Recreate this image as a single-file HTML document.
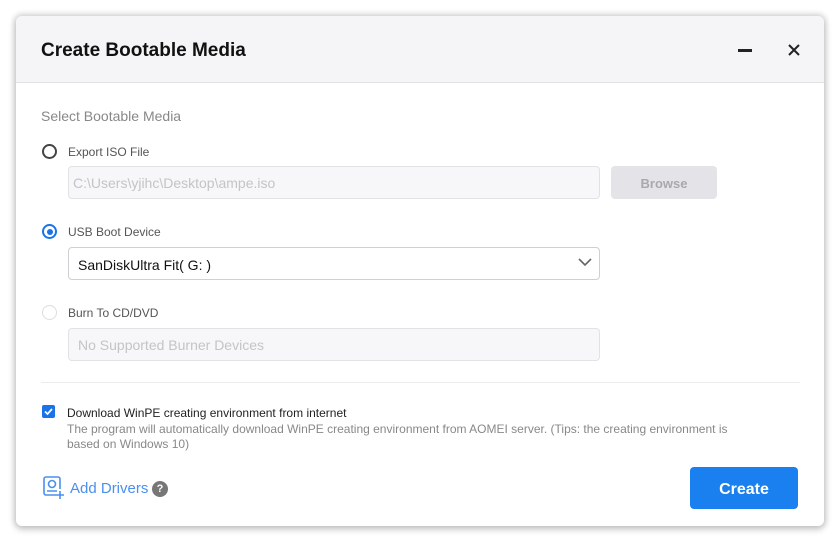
<!DOCTYPE html>
<html><head><meta charset="utf-8"><style>
*{box-sizing:border-box;margin:0;padding:0}
body{width:840px;height:542px;background:#fff;font-family:"Liberation Sans",sans-serif;position:relative;overflow:hidden}
.dlg{position:absolute;left:16px;top:16px;width:808px;height:510px;background:#fff;border-radius:6px;box-shadow:0 0 6px 2px rgba(0,0,0,.18),0 4px 8px rgba(0,0,0,.12);overflow:hidden}
.hdr{position:absolute;left:0;top:0;width:100%;height:67px;background:#f5f5f7;border-bottom:1px solid #e2e2e6}
.title{position:absolute;left:25px;top:24px;font-size:19px;font-weight:bold;color:#111}
.abs{position:absolute}
.t{font-size:12px;color:#555}
.radio{position:absolute;width:15px;height:15px;border-radius:50%;border:2px solid #444}
.inp{position:absolute;height:33px;border:1px solid #e2e2e6;border-radius:4px;background:#f7f7f9;font-size:14px;color:#c4c4c8;padding:8px 4px}
</style></head><body>
<div class="dlg">
 <div class="hdr"><div class="title">Create Bootable Media</div>
  <div class="abs" style="left:722px;top:33px;width:14px;height:3px;background:#222"></div>
  <svg class="abs" style="left:771px;top:27px" width="14" height="14" viewBox="0 0 14 14"><path d="M2 2L12 12M12 2L2 12" stroke="#222" stroke-width="2"/></svg>
 </div>
 <div class="abs" style="left:25px;top:92px;font-size:14px;color:#888">Select Bootable Media</div>
 <div class="radio" style="left:26px;top:128px"></div>
 <div class="abs t" style="left:52px;top:129px">Export ISO File</div>
 <div class="inp" style="left:52px;top:150px;width:532px">C:\Users\yjihc\Desktop\ampe.iso</div>
 <div class="abs" style="left:595px;top:150px;width:106px;height:33px;background:#e4e4e8;border-radius:4px;color:#a8a8ae;font-size:13px;font-weight:bold;text-align:center;line-height:35px">Browse</div>
 <div class="radio" style="left:26px;top:208px;border-color:#1a73e8"><div style="position:absolute;left:2.5px;top:2.5px;width:6px;height:6px;border-radius:50%;background:#1a73e8"></div></div>
 <div class="abs t" style="left:52px;top:209px">USB Boot Device</div>
 <div class="abs" style="left:52px;top:231px;width:532px;height:33px;border:1px solid #cfcfd4;border-radius:4px;font-size:14px;color:#111;padding:9px 9px">SanDiskUltra Fit( G: )</div>
 <svg class="abs" style="left:562px;top:242px" width="14" height="9" viewBox="0 0 14 9"><path d="M1 1L7 7L13 1" stroke="#666" stroke-width="1.6" fill="none"/></svg>
 <div class="radio" style="left:26px;top:289px;border-color:#ddd;border-width:1.5px"></div>
 <div class="abs t" style="left:52px;top:290px">Burn To CD/DVD</div>
 <div class="inp" style="left:52px;top:312px;width:532px;padding-left:9px">No Supported Burner Devices</div>
 <div class="abs" style="left:25px;top:366px;width:759px;height:1px;background:#ececef"></div>
 <div class="abs" style="left:26px;top:389px;width:13px;height:13px;background:#1a73e8;border-radius:2px"><svg width="13" height="13" viewBox="0 0 13 13"><path d="M3 6.5L5.5 9L10 4" stroke="#fff" stroke-width="1.7" fill="none"/></svg></div>
 <div class="abs" style="left:51px;top:390px;font-size:12px;color:#222">Download WinPE creating environment from internet</div>
 <div class="abs" style="left:51px;top:406px;width:740px;font-size:12px;color:#888;line-height:15px;white-space:nowrap">The program will automatically download WinPE creating environment from AOMEI server. (Tips: the creating environment is<br>based on Windows 10)</div>
 <svg class="abs" style="left:26px;top:460px" width="24" height="24" viewBox="0 0 24 24"><path d="M14 19H4a2 2 0 0 1-2-2V3a2 2 0 0 1 2-2h12a2 2 0 0 1 2 2v10" stroke="#4a8ff0" stroke-width="1.6" fill="none"/><circle cx="10" cy="8" r="3.5" stroke="#4a8ff0" stroke-width="1.6" fill="none"/><path d="M5 15h10M18 15v8M14 19h8" stroke="#4a8ff0" stroke-width="1.6"/></svg>
 <div class="abs" style="left:54px;top:464px;font-size:15px;color:#4a8ff0">Add Drivers</div>
 <div class="abs" style="left:136px;top:465px;width:16px;height:16px;border-radius:50%;background:#777;color:#fff;font-size:11px;font-weight:bold;text-align:center;line-height:16px">?</div>
 <div class="abs" style="left:674px;top:451px;width:108px;height:42px;background:#1a80f0;border-radius:4px;color:#fff;font-size:16px;font-weight:bold;text-align:center;line-height:46px">Create</div>
</div>
</body></html>
